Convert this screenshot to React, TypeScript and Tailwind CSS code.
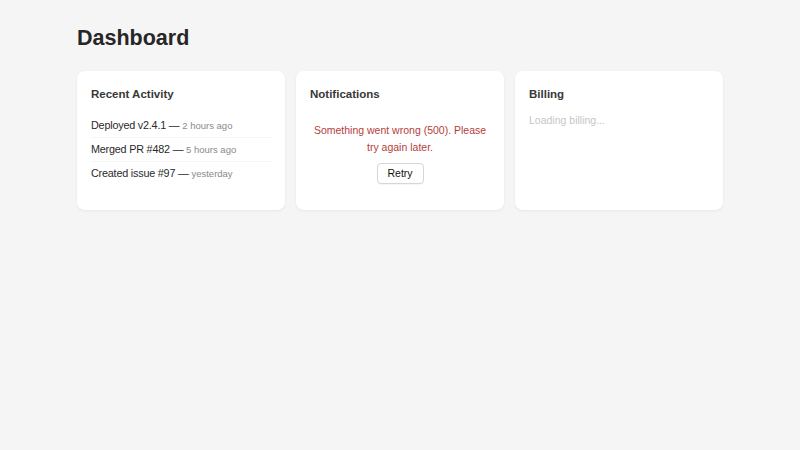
import React from "react";

const items = [
  { text: "Deployed v2.4.1", time: "2 hours ago" },
  { text: "Merged PR #482", time: "5 hours ago" },
  { text: "Created issue #97", time: "yesterday" },
];

export default function App() {
  return (
    <div
      className="min-h-[450px] w-full bg-[#f5f5f5] text-[#222]"
      style={{ fontFamily: "'Liberation Sans', Arial, sans-serif" }}
    >
      <div className="mx-auto w-[646px] pt-[24px]">
        <h1 className="text-[21.5px] font-bold leading-[28px] text-[#262626]">Dashboard</h1>
        <div className="mt-[19px] grid grid-cols-3 gap-[11px]">
          <div className="rounded-[8px] bg-white px-[14px] pt-[15px] pb-[14px] shadow-[0_1px_3px_rgba(0,0,0,0.06)]">
            <h2 className="text-[11.5px] font-bold leading-[17px] text-[#383838]">Recent Activity</h2>
            <ul className="mt-[11px] mr-[-1px]">
              {items.map((it, i) => (
                <li
                  key={i}
                  className={`py-[4px] text-[10.8px] leading-[15px] tracking-[-0.2px] text-[#2a2a2a] ${i < items.length - 1 ? "border-b border-[#f6f6f6]" : ""}`}
                >
                  {it.text} — <span className="text-[9.5px] tracking-normal text-[#8a8a8a]">{it.time}</span>
                </li>
              ))}
            </ul>
          </div>
          <div className="rounded-[8px] bg-white px-[14px] pt-[15px] pb-[14px] shadow-[0_1px_3px_rgba(0,0,0,0.06)]">
            <h2 className="text-[11.5px] font-bold leading-[17px] text-[#383838]">Notifications</h2>
            <div className="mt-[19px] flex flex-col items-center">
              <p className="text-center text-[10.5px] leading-[17px] text-[#b5403a]">
                Something went wrong (500). Please try again later.
              </p>
              <button className="mt-[7px] mb-[12px] h-[21px] w-[47px] rounded-[4px] border border-[#d6d6d6] bg-white text-[10.5px] leading-[19px] text-[#111] shadow-[0_1px_1px_rgba(0,0,0,0.04)]">
                Retry
              </button>
            </div>
          </div>
          <div className="rounded-[8px] bg-white px-[14px] pt-[15px] pb-[14px] shadow-[0_1px_3px_rgba(0,0,0,0.06)]">
            <h2 className="text-[11.5px] font-bold leading-[17px] text-[#383838]">Billing</h2>
            <p className="mt-[9px] text-[10.5px] leading-[16px] text-[#c6c6c6]">Loading billing...</p>
          </div>
        </div>
      </div>
    </div>
  );
}
